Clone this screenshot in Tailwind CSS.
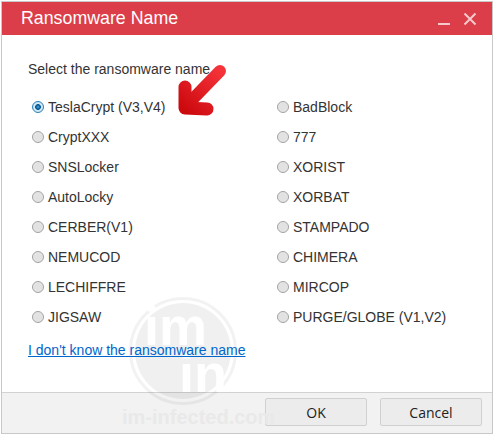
<!DOCTYPE html>
<html lang="en">
<head>
    <meta charset="UTF-8">
    <title>Ransomware Name</title>
    <script src="https://cdn.jsdelivr.net/npm/@tailwindcss/browser@4"></script>
</head>
<body class="bg-white w-[495px] h-[436px] overflow-hidden font-['Liberation_Sans',sans-serif]">
    <div class="relative ml-px mt-px w-[492px] h-[433px] flex flex-col border border-[#c8c8c8] bg-white">
        <!-- Title bar -->
        <div class="h-[33px] shrink-0 bg-[#db3e49] flex items-center pl-[19px] pr-[15px] text-white">
            <h1 class="text-[17.8px] leading-none flex-1 pt-px">Ransomware Name</h1>
            <svg class="w-[14px] h-[14px] mr-[12px]" viewBox="0 0 14 14"><rect x="1" y="11" width="12" height="2" fill="#f6c9cc"/></svg>
            <svg class="w-[14px] h-[14px]" viewBox="0 0 14 14" fill="none" stroke="#f6c9cc" stroke-width="2"><path d="M1.500 1.500l11 11M12.500 1.500l-11 11"/></svg>
        </div>

        <!-- Body -->
        <div class="flex-1 pl-[26px] pt-[25px] text-[14px] leading-[18px] text-[#333]">
            <p>Select the ransomware name</p>
            <div class="mt-[14px] grid grid-cols-[245px_1fr] auto-rows-[30px] pl-1">
                <label class="flex items-center h-[30px] gap-1"><span class="w-3 h-3 rounded-full border border-[#2f7fb5] bg-[radial-gradient(circle,#4aa3dc_0,#0b5a96_30%,#0b5a96_38%,#d6ecf8_44%,#bcd9ea_100%)]"></span>TeslaCrypt (V3,V4)</label>
                <label class="flex items-center h-[30px] gap-1"><span class="w-3 h-3 rounded-full border border-[#a0a0a0] bg-[radial-gradient(circle,#e2e2e2_0,#e2e2e2_55%,#f6f6f6_100%)]"></span>BadBlock</label>
                <label class="flex items-center h-[30px] gap-1"><span class="w-3 h-3 rounded-full border border-[#a0a0a0] bg-[radial-gradient(circle,#e2e2e2_0,#e2e2e2_55%,#f6f6f6_100%)]"></span>CryptXXX</label>
                <label class="flex items-center h-[30px] gap-1"><span class="w-3 h-3 rounded-full border border-[#a0a0a0] bg-[radial-gradient(circle,#e2e2e2_0,#e2e2e2_55%,#f6f6f6_100%)]"></span>777</label>
                <label class="flex items-center h-[30px] gap-1"><span class="w-3 h-3 rounded-full border border-[#a0a0a0] bg-[radial-gradient(circle,#e2e2e2_0,#e2e2e2_55%,#f6f6f6_100%)]"></span>SNSLocker</label>
                <label class="flex items-center h-[30px] gap-1"><span class="w-3 h-3 rounded-full border border-[#a0a0a0] bg-[radial-gradient(circle,#e2e2e2_0,#e2e2e2_55%,#f6f6f6_100%)]"></span>XORIST</label>
                <label class="flex items-center h-[30px] gap-1"><span class="w-3 h-3 rounded-full border border-[#a0a0a0] bg-[radial-gradient(circle,#e2e2e2_0,#e2e2e2_55%,#f6f6f6_100%)]"></span>AutoLocky</label>
                <label class="flex items-center h-[30px] gap-1"><span class="w-3 h-3 rounded-full border border-[#a0a0a0] bg-[radial-gradient(circle,#e2e2e2_0,#e2e2e2_55%,#f6f6f6_100%)]"></span>XORBAT</label>
                <label class="flex items-center h-[30px] gap-1"><span class="w-3 h-3 rounded-full border border-[#a0a0a0] bg-[radial-gradient(circle,#e2e2e2_0,#e2e2e2_55%,#f6f6f6_100%)]"></span>CERBER(V1)</label>
                <label class="flex items-center h-[30px] gap-1"><span class="w-3 h-3 rounded-full border border-[#a0a0a0] bg-[radial-gradient(circle,#e2e2e2_0,#e2e2e2_55%,#f6f6f6_100%)]"></span>STAMPADO</label>
                <label class="flex items-center h-[30px] gap-1"><span class="w-3 h-3 rounded-full border border-[#a0a0a0] bg-[radial-gradient(circle,#e2e2e2_0,#e2e2e2_55%,#f6f6f6_100%)]"></span>NEMUCOD</label>
                <label class="flex items-center h-[30px] gap-1"><span class="w-3 h-3 rounded-full border border-[#a0a0a0] bg-[radial-gradient(circle,#e2e2e2_0,#e2e2e2_55%,#f6f6f6_100%)]"></span>CHIMERA</label>
                <label class="flex items-center h-[30px] gap-1"><span class="w-3 h-3 rounded-full border border-[#a0a0a0] bg-[radial-gradient(circle,#e2e2e2_0,#e2e2e2_55%,#f6f6f6_100%)]"></span>LECHIFFRE</label>
                <label class="flex items-center h-[30px] gap-1"><span class="w-3 h-3 rounded-full border border-[#a0a0a0] bg-[radial-gradient(circle,#e2e2e2_0,#e2e2e2_55%,#f6f6f6_100%)]"></span>MIRCOP</label>
                <label class="flex items-center h-[30px] gap-1"><span class="w-3 h-3 rounded-full border border-[#a0a0a0] bg-[radial-gradient(circle,#e2e2e2_0,#e2e2e2_55%,#f6f6f6_100%)]"></span>JIGSAW</label>
                <label class="flex items-center h-[30px] gap-1"><span class="w-3 h-3 rounded-full border border-[#a0a0a0] bg-[radial-gradient(circle,#e2e2e2_0,#e2e2e2_55%,#f6f6f6_100%)]"></span>PURGE/GLOBE (V1,V2)</label>
            </div>
        </div>

        <!-- Footer -->
        <div class="h-[41px] shrink-0 bg-[#f2f2f2] border-t border-[#d2d2d2] flex justify-end items-start gap-[13px] pt-[5px] pr-[10px] font-['Open_Sans',sans-serif] text-[14px] text-[#222]">
            <button class="w-[102px] h-[28px] bg-[#ececec] border border-[#d0d0d0] rounded-[2px]">OK</button>
            <button class="w-[102px] h-[28px] bg-[#ececec] border border-[#d0d0d0] rounded-[2px]">Cancel</button>
        </div>

        <!-- Watermark -->
        <div class="absolute left-[127px] top-[295px] w-[108px] h-[108px] rounded-full border-[3px] border-black/[0.05] p-[3px] pointer-events-none">
            <div class="relative w-full h-full rounded-full bg-black/[0.06] text-white font-bold text-[54px] leading-[45px]">
                <div class="absolute left-[9px] top-px">im</div>
                <div class="absolute left-[44px] top-[48px]">in</div>
            </div>
        </div>
        <div class="absolute left-[120px] top-[403px] text-[20px] leading-6 font-bold text-[#e9e9e9] pointer-events-none">im-infected.com</div>

        <a href="#" class="absolute left-[26px] top-[339px] text-[14px] leading-[18px] text-[#0066cc] underline">I don't know the ransomware name</a>

        <!-- Arrow -->
        <svg class="absolute left-[173px] top-[62px] w-[56px] h-[54px]" viewBox="0 0 56 54" fill="none" stroke-linecap="round" stroke-linejoin="round">
            <defs>
                <linearGradient id="arrowRed" gradientUnits="userSpaceOnUse" x1="46" y1="6" x2="10" y2="46">
                    <stop offset="0" stop-color="#f5333a"/>
                    <stop offset="1" stop-color="#cc0a0e"/>
                </linearGradient>
            </defs>
            <path d="M45 7L12 41" stroke="url(#arrowRed)" stroke-width="12"/>
            <path d="M10 23L10 44L32 45" stroke="url(#arrowRed)" stroke-width="13"/>
        </svg>
    </div>
</body>
</html>
